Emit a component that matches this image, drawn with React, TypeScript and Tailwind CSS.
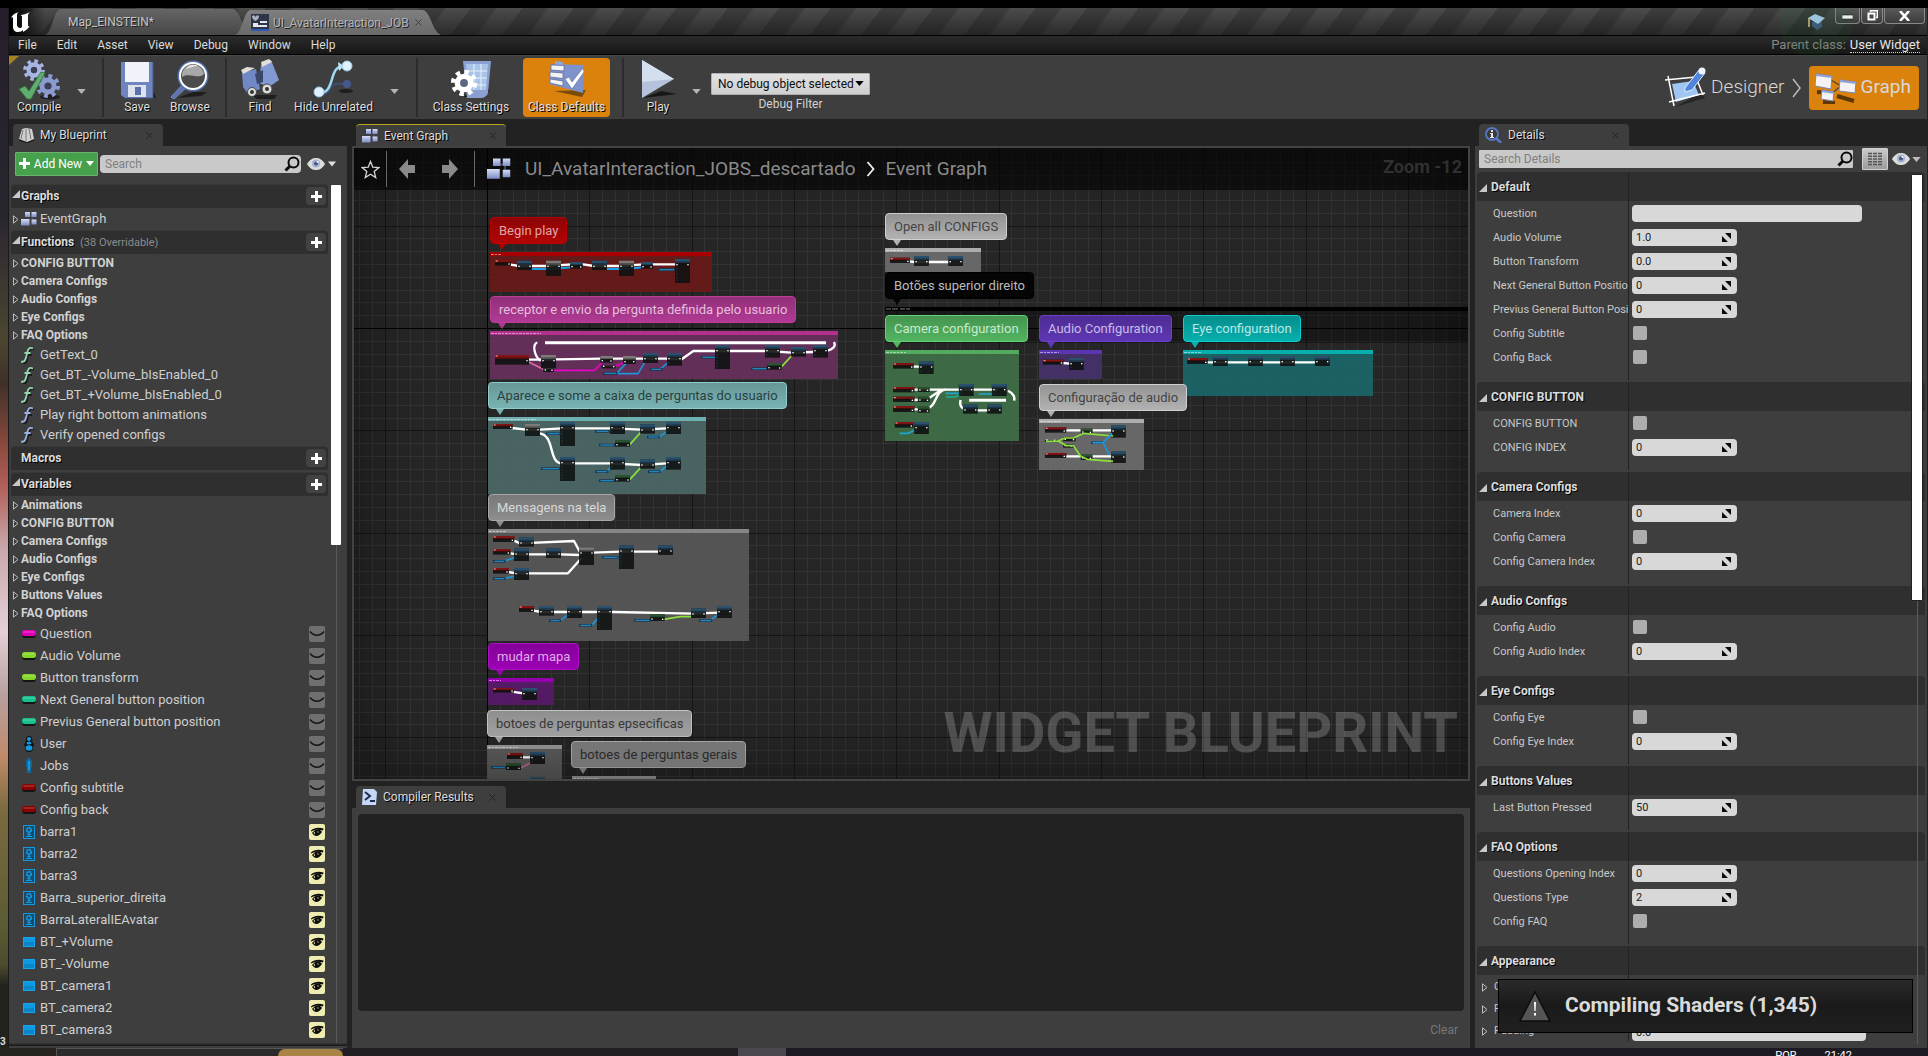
import React, { useState } from "react";

/* ---------- small glyphs ---------- */

const Caret = ({ className = "" }: { className?: string }) => (
  <svg className={className} width="10" height="6" viewBox="0 0 10 6" aria-hidden="true">
    <path d="M0 0h10L5 6z" fill="currentColor" />
  </svg>
);

const Magnifier = () => (
  <svg width="16" height="16" viewBox="0 0 16 16" fill="none" stroke="#0a0a0a" aria-hidden="true">
    <circle cx="9.5" cy="6.5" r="5" strokeWidth="2" />
    <path d="M6 10L1.5 14.5" strokeWidth="3" />
  </svg>
);

const ViewEye = () => (
  <svg width="18" height="12" viewBox="0 0 18 12" aria-hidden="true">
    <path d="M0 6C3 1 6 0 9 0s6 1 9 6c-3 5-6 6-9 6S3 11 0 6z" fill="#dcdcdc" />
    <circle cx="9" cy="5.500" r="4" fill="#a3b2d2" />
    <circle cx="9" cy="5.500" r="2" fill="#46557c" />
    <circle cx="10.500" cy="4" r="1" fill="#fff" />
  </svg>
);

const GraphGlyph = ({ size = 16 }: { size?: number }) => (
  <svg width={size} height={size} viewBox="0 0 16 16" aria-hidden="true">
    <defs>
      <linearGradient id="gg" x1="0" y1="0" x2="0" y2="1">
        <stop offset="0" stopColor="#d5ddf7" />
        <stop offset="1" stopColor="#7c8cc4" />
      </linearGradient>
    </defs>
    <path d="M4 5h10M12 3v10" stroke="#556" strokeWidth="1" />
    <rect x="4" y="1" width="5" height="5" fill="url(#gg)" />
    <rect x="10.500" y="1" width="5" height="5" fill="url(#gg)" />
    <rect x="0" y="8" width="8.500" height="6.500" fill="url(#gg)" />
    <rect x="10.500" y="8.500" width="5" height="5" fill="url(#gg)" />
  </svg>
);

const Plus = ({ s = 11 }: { s?: number }) => (
  <svg width={s} height={s} viewBox="0 0 11 11" aria-hidden="true">
    <path d="M4 0h3v4h4v3H7v4H4V7H0V4h4z" fill="#fff" />
  </svg>
);

const Expanded = () => (
  <svg width="8" height="8" viewBox="0 0 8 8" className="shrink-0" aria-hidden="true">
    <path d="M8 0v8H0z" fill="#c8c8c8" />
  </svg>
);

const Collapsed = () => (
  <svg width="6" height="9" viewBox="0 0 6 9" className="shrink-0" aria-hidden="true">
    <path d="M.5.8v7.400L5 4.500z" fill="none" stroke="#bdbdbd" />
  </svg>
);

const CloseX = () => (
  <svg width="7" height="7" viewBox="0 0 7 7" aria-hidden="true">
    <path d="M.5.5l6 6M6.500.5l-6 6" stroke="#222222" strokeWidth="1" />
  </svg>
);

/* ---------- toolbar drawings ---------- */

const gear = (cx: number, cy: number, r: number, fill: string, hole: string) => (
  <g>
    <circle cx={cx} cy={cy} r={r} fill="none" stroke={fill} strokeWidth={r * 0.4} strokeDasharray={`${r * 0.393} ${r * 0.393}`} />
    <circle cx={cx} cy={cy} r={r * 0.85} fill={fill} />
    <circle cx={cx} cy={cy} r={r * 0.36} fill={hole} />
  </g>
);

const CompileIcon = () => (
  <svg width="42" height="42" viewBox="0 0 42 42" aria-hidden="true">
    <ellipse cx="32" cy="38" rx="10" ry="2.500" fill="#1e1e1e" />
    {gear(16, 11, 9, "#a8b5e2", "#3a3f55")}
    {gear(30, 27, 10, "#8b9bd0", "#3a3f55")}
    <path d="M1 30l6-3 4 5L23 13l4 1-14 26H9z" fill="#5fae6e" stroke="#2e6e3c" strokeWidth=".8" />
  </svg>
);
const SaveIcon = () => (
  <svg width="42" height="42" viewBox="0 0 42 42" aria-hidden="true">
    <path d="M8 39h32l-2-6z" fill="#1e1e1e" />
    <path d="M5 3h32v36H9l-4-3z" fill="#6f85bd" />
    <path d="M9 3h24v20H9z" fill="#f1f3fa" />
    <path d="M12 26h18v12H12z" fill="#dde2f0" />
    <path d="M19 28h6v8h-6z" fill="#5b70a8" />
    <path d="M37 3v36H10" fill="none" stroke="#46588c" />
  </svg>
);
const BrowseIcon = () => (
  <svg width="42" height="42" viewBox="0 0 42 42" aria-hidden="true">
    <path d="M8 39l16-6 14 0-6 4z" fill="#1e1e1e" />
    <path d="M13 26L2 38l3 2 12-11z" fill="#5c74b4" stroke="#8ea2d8" strokeWidth=".6" />
    <circle cx="24" cy="17" r="15.500" fill="#5470b0" />
    <circle cx="24" cy="17" r="14" fill="#fff" />
    <circle cx="24" cy="17" r="12" fill="#4c4c4c" />
    <path d="M13 18a11 11 0 0 1 22-3c-6 6-14-2-22 3z" fill="#a8a8a8" />
    <path d="M17 10a9 9 0 0 1 12-3c-5 0-8 2-12 3z" fill="#e6e6e6" />
  </svg>
);
const FindIcon = () => (
  <svg width="42" height="42" viewBox="0 0 42 42" aria-hidden="true">
    <path d="M12 36h26l-3 4H18z" fill="#1e1e1e" />
    <path d="M3 14l14-4 4 20-12 5-5-7z" fill="#7188c6" />
    <path d="M22 6l10-5 8 20-10 7-10-4z" fill="#8399d6" />
    <path d="M2 11l6-3 8 1-12 6z" fill="#e2dfd8" />
    <path d="M22 3l8-3 3 3-10 5z" fill="#e2dfd8" />
    <path d="M16 15l8-4v12l-6 2z" fill="#3a4668" />
    <circle cx="13" cy="33" r="4.500" fill="#dcdcdc" stroke="#444" />
    <circle cx="28" cy="30" r="5" fill="#dcdcdc" stroke="#444" />
    <circle cx="13" cy="33" r="2" fill="#333" />
    <circle cx="28" cy="30" r="2" fill="#333" />
  </svg>
);
const HideIcon = () => (
  <svg width="42" height="42" viewBox="0 0 42 42" aria-hidden="true">
    <path d="M6 36c12-1 10-8 14-10s8-1 14-1" fill="none" stroke="#3d4c70" strokeWidth="2.500" />
    <ellipse cx="33" cy="32" rx="7" ry="2" fill="#1e1e1e" />
    <circle cx="34" cy="25" r="4" fill="#44588c" />
    <path d="M6 34c18 0 8-28 26-27" fill="none" stroke="#9fd8f2" strokeWidth="2.500" />
    <path d="M25 3l6 4-5 5z" fill="#bfe6f8" />
    <circle cx="34" cy="7" r="5" fill="#dff1fc" stroke="#9cc9e6" />
    <circle cx="6" cy="33" r="5" fill="#dff1fc" stroke="#9cc9e6" />
  </svg>
);
const SettingsIcon = () => (
  <svg width="42" height="42" viewBox="0 0 42 42" aria-hidden="true">
    <path d="M10 38h26l4-8z" fill="#1e1e1e" />
    <path d="M13 2h28l-3 32c-1 4-5 5-8 5H17z" fill="#8b9fd0" />
    <path d="M16 5h22l-2 26H18z" fill="#a9c4e6" />
    <path d="M17 12h20M17 19h20M17 26h19M24 5v26M31 5v26" stroke="#e6f0fa" />
    {gear(14, 24, 11, "#ffffff", "#5b6685")}
  </svg>
);
const DefaultsIcon = () => (
  <svg width="42" height="42" viewBox="0 0 42 42" aria-hidden="true">
    <path d="M8 32l32-1-4 7z" fill="#7a4a0a" />
    <path d="M5 5L38 6l-1 28L3 25z" fill="#7e93cc" />
    <path d="M9 2l8 1v3H9z" fill="#90a4d8" />
    <path d="M5 6l13 .5v5.500L5 11zM4 13l13 1v5.500L4 18zM4 20l13 2v5L4 24z" fill="#f3f3f6" stroke="#55618c" strokeWidth=".7" />
    <path d="M19 20l4-2 3 5L37 9l1 4-12 17z" fill="#fff" stroke="#4a568a" strokeWidth=".5" />
  </svg>
);
const PlayIcon = () => (
  <svg width="42" height="42" viewBox="0 0 42 42" aria-hidden="true">
    <path d="M6 39l34-4-16-3z" fill="#171717" />
    <path d="M5 1l32 19L5 39z" fill="#b5c2dc" />
    <path d="M5 1l32 19-32 3z" fill="#d3deef" />
  </svg>
);
const DesignerIcon = () => (
  <svg width="42" height="42" viewBox="0 0 42 42" aria-hidden="true">
    <path d="M10 40l30-9-4-5z" fill="#262626" />
    <path d="M7 17l21-3 6 14-23 7z" fill="#9fc6f2" />
    <path d="M0 13l31-3M3 9l6 30M4 35l36-9M30 8l8 20" stroke="#fff" strokeWidth="1.500" fill="none" />
    <path d="M20 21L34 3l6 3-13 17-7 2z" fill="#4f86dc" stroke="#dfeaff" strokeWidth="1" />
    <circle cx="37" cy="4" r="3.500" fill="#f2f6ff" />
  </svg>
);
const WindowsIcon = () => (
  <svg width="42" height="32" viewBox="0 0 42 32" aria-hidden="true">
    <path d="M2 20l14 1M22 24l17 5M8 30l12 1" stroke="#5c3605" strokeWidth="4" />
    <path d="M16 8l10 6M16 22l10-8" stroke="#444" strokeWidth="1.200" />
    <path d="M1 2l16 2-1 13L0 14z" fill="#f4f2f2" stroke="#7b84ad" />
    <path d="M25 8l16 2-1 11-16-2z" fill="#f4f2f2" stroke="#7b84ad" />
    <path d="M7 18l12 2-1 9-12-2z" fill="#f4f2f2" stroke="#7b84ad" />
    <path d="M1 3l16 2M25 9l16 2M7 19l12 2" stroke="#8fa2d8" strokeWidth="2" />
  </svg>
);

/* ---------- title bar ---------- */

const TabShape = ({ top, bottom }: { top: string; bottom: string }) => (
  <svg className="absolute inset-0 h-full w-full" viewBox="0 0 206 26" preserveAspectRatio="none" aria-hidden="true">
    <defs>
      <linearGradient id={"t" + top.slice(1)} x1="0" y1="0" x2="0" y2="1">
        <stop offset="0" stopColor={top} />
        <stop offset="1" stopColor={bottom} />
      </linearGradient>
    </defs>
    <path d="M0 26C7 24 8 3 15 0h173c8 2 9 22 18 26z" fill={`url(#t${top.slice(1)})`} />
  </svg>
);

const TitleBar = () => (
  <header className="relative flex h-[27px] shrink-0 bg-[linear-gradient(to_bottom,transparent,rgba(10,10,10,.5)),repeating-linear-gradient(127deg,#3e3e3e_0px,#3e3e3e_19px,#4c4c4c_22px,#4c4c4c_41px)]">
    <div className="flex w-9 items-center bg-gradient-to-r from-black to-transparent pl-0.5">
      <svg width="20" height="20" viewBox="0 0 20 20" aria-label="Unreal Engine" role="img">
        <path
          d="M0 6C1 3 4 1 8 0 6 1 6 2 6 4v9c0 2 2 3 3 3s2-.5 2-2V5c0-1-.5-1.500-1.500-2 2 0 6-1 9.500-3-1.500 1.500-2 2.500-2 4v9c0 1 .5 1.500 1.500 1.200C17 17 14 19 12 20v-2c-1 1.200-2.500 2-5 2-3 0-5-2-5-5V6C2 5 1 5 0 6z"
          fill="#fff"
        />
      </svg>
    </div>
    <button className="relative mt-px flex w-[206px] items-center pl-[23px] text-xs text-[#c4c4c4] [text-shadow:1px_1px_0_#222]">
      <TabShape top="#656565" bottom="#474747" />
      <span className="relative">Map_EINSTEIN*</span>
    </button>
    <button className="relative -ml-4 mt-0.5 flex w-[206px] items-center gap-1 pl-4 text-xs text-[#b4b4b4] [text-shadow:1px_1px_0_#222]">
      <TabShape top="#7f7f7f" bottom="#6a6a6a" />
      <svg className="relative" width="18" height="17" viewBox="0 0 18 17" aria-hidden="true">
        <rect width="18" height="17" fill="#2d3648" />
        <rect y="15" width="18" height="2" fill="#2f59b8" />
        <path d="M1 2c2-2 3 0 3.500 1C5 2 6 0 8 2c0 3-2 4-3.500 5C3 6 1 5 1 2z" fill="#aab0bd" />
        <path d="M9 7h7v2H9zM2 11h14v2H2zM2 9h5v2H2z" fill="#e6e8ee" />
      </svg>
      <span className="relative whitespace-nowrap">UI_AvatarInteraction_JOB</span>
      <span className="relative ml-0.5 opacity-60">
        <CloseX />
      </span>
    </button>
    <div className="ml-auto flex items-start">
      <svg className="mr-2.5 mt-1.5" width="17" height="16" viewBox="0 0 17 16" aria-hidden="true">
        <path d="M4 8v4l5 4 5-3V7z" fill="#405a80" />
        <path d="M0 4l7-4 10 4-7 6z" fill="#a8cdf0" />
        <path d="M1 4v9" stroke="#e0c48a" strokeWidth="1.500" />
      </svg>
      <div className="mr-0.5 flex h-4 gap-px">
        <button aria-label="Minimize" className="flex w-[25px] items-center justify-center rounded-b-sm border border-t-0 border-[#8a8a8a] bg-gradient-to-b from-[#5a5a5a] to-[#3c3c3c]">
          <svg width="11" height="9" viewBox="0 0 11 9"><path d="M0 4h11v4H0z" fill="#fff" stroke="#111" strokeWidth=".6" /></svg>
        </button>
        <button aria-label="Restore" className="flex w-[22px] items-center justify-center rounded-b-sm border border-t-0 border-[#8a8a8a] bg-gradient-to-b from-[#5a5a5a] to-[#3c3c3c]">
          <svg width="11" height="11" viewBox="0 0 11 11" fill="none" stroke="#fff"><path d="M3.500 2V.7h6.800v6.800H9" strokeWidth="1.400" /><path d="M1.500 3.500h6v6h-6z" strokeWidth="2" /></svg>
        </button>
        <button aria-label="Close" className="flex w-[41px] items-center justify-center rounded-b-sm border border-t-0 border-[#8a8a8a] bg-gradient-to-b from-[#5a5a5a] to-[#3c3c3c]">
          <svg width="11" height="10" viewBox="0 0 11 10"><path d="M1 0l9 10M10 0L1 10" stroke="#fff" strokeWidth="2.600" /></svg>
        </button>
      </div>
    </div>
    <div className="pointer-events-none absolute right-[74px] -bottom-[23px] z-10 size-[74px] rounded-full bg-[#1f7a2a]/10 [clip-path:inset(24px_0_0_0)]" />
  </header>
);

const MenuBar = () => (
  <nav className="flex h-5 shrink-0 items-center border-y border-black bg-gradient-to-b from-[#2b2b2b] to-[#171717] pr-[7px] pl-[9px] text-xs text-[#dadada]">
    <div className="flex gap-5">
      {["File", "Edit", "Asset", "View", "Debug", "Window", "Help"].map((m) => (
        <button key={m}>{m}</button>
      ))}
    </div>
    <div className="ml-auto flex gap-1 text-[13px] leading-[15px]">
      <span className="text-[#858585]">Parent class:</span>
      <a href="#parent" className="border-b border-dotted border-[#d0d0d0] text-[#e6e6e6]">User Widget</a>
    </div>
  </nav>
);

/* ---------- toolbar ---------- */

const Tool = ({ icon, label, active, w }: { icon: React.ReactNode; label: string; active?: boolean; w: string }) => (
  <button className={`flex h-[59px] flex-col items-center justify-between rounded-sm pt-px pb-0.5 text-xs leading-4 whitespace-nowrap text-[#dedede] [text-shadow:1px_1px_0_#000] ${w} ${active ? "bg-[#da820c]" : ""}`}>
    {icon}
    <span className="-mt-1">{label}</span>
  </button>
);
const Sep = () => <div className="h-[59px] w-0.5 bg-[#2c2c2c]" />;
const Drop = ({ label }: { label: string }) => (
  <button aria-label={label} className="mt-2 text-[#b5b5b5]">
    <Caret className="h-[5px] w-[9px]" />
  </button>
);

const Toolbar = () => (
  <div className="relative flex h-16 shrink-0 items-center border-t border-[#484848] bg-[#3e3e3e] pr-2 text-white">
    <svg className="absolute top-0 left-0" width="10" height="9" viewBox="0 0 10 9" aria-hidden="true"><path d="M0 0h10L0 9z" fill="#a88420" /></svg>
    <div className="flex items-center pl-[3px]">
      <Tool w="w-[54px]" icon={<CompileIcon />} label="Compile" />
      <div className="flex w-9 justify-start pl-[11px]"><Drop label="Compile options" /></div>
      <Sep />
      <div className="flex pl-2">
        <Tool w="w-[50px]" icon={<SaveIcon />} label="Save" />
        <Tool w="w-[56px]" icon={<BrowseIcon />} label="Browse" />
      </div>
      <div className="w-[7px]" />
      <Sep />
      <div className="flex pl-2">
        <Tool w="w-[50px]" icon={<FindIcon />} label="Find" />
        <Tool w="w-[97px]" icon={<HideIcon />} label="Hide Unrelated" />
      </div>
      <div className="flex w-[30px] justify-start pl-2"><Drop label="Hide unrelated options" /></div>
      <div className="w-1" />
      <Sep />
      <div className="flex pl-2">
        <Tool w="w-[90px]" icon={<SettingsIcon />} label="Class Settings" />
        <div className="w-[7px]" />
        <Tool w="w-[87px]" icon={<DefaultsIcon />} label="Class Defaults" active />
      </div>
      <div className="w-3" />
      <Sep />
      <div className="w-2.5" />
      <Tool w="w-[48px]" icon={<PlayIcon />} label="Play" />
      <div className="flex w-[29px] justify-center"><Drop label="Play options" /></div>
      <div className="flex flex-col items-center">
        <div className="relative mt-2.5">
          <select id="debug" defaultValue="none" className="block h-[22px] w-[159px] appearance-none rounded-[1px] border border-[#b0b0b0] bg-gradient-to-b from-[#e2e2e2] to-[#cfcfcf] pl-1.5 text-xs text-[#0c0c0c]">
            <option value="none">No debug object selected</option>
          </select>
          <Caret className="pointer-events-none absolute top-2 right-1.5 h-[5px] w-[9px] text-black" />
        </div>
        <label htmlFor="debug" className="text-xs leading-[18px] text-[#d2d2d2]">Debug Filter</label>
      </div>
    </div>
    <div className="ml-auto flex items-center text-[19px] text-[#d8d8d8]">
      <button className="flex items-center gap-1 font-light">
        <DesignerIcon /> Designer
      </button>
      <svg className="mx-1.5" width="12" height="20" viewBox="0 0 12 20" aria-hidden="true"><path d="M2 1l7 9-7 9" fill="none" stroke="#bbb" strokeWidth="1.500" /></svg>
      <button className="flex h-11 items-center gap-1 rounded-sm bg-[#da820c] pr-2 pl-1.5">
        <WindowsIcon /> Graph
      </button>
    </div>
  </div>
);

/* ---------- dock tabs ---------- */

const DockTab = ({ icon, label, active }: { icon: React.ReactNode; label: string; active?: boolean }) => (
  <div className="h-[27px] shrink-0 pt-[5px] pl-1">
    <div className={`flex h-[22px] w-[150px] items-center rounded-t-sm bg-[#3e3e3e] pr-2.5 pl-1.5 ${active ? "border-t border-[#b8a51c]" : ""}`}>
      <button className="flex items-center gap-1.5 text-xs text-[#dcdcdc] [text-shadow:1px_1px_0_#000]">
        {icon}
        {label}
      </button>
      <button aria-label={"Close " + label} className="ml-auto"><CloseX /></button>
    </div>
  </div>
);

/* ---------- My Blueprint ---------- */

const HeaderRow = ({ title, note, open = true }: { title: string; note?: string; open?: boolean }) => (
  <div className="flex h-6 shrink-0 items-center rounded-t-sm border-t border-[#383838] bg-[#2f2f2f] pr-0.5 pb-px pl-px">
    <span className="flex w-[9px] pb-1">{open && <Expanded />}</span>
    <span className="text-xs font-bold text-[#dcdcdc] [text-shadow:1px_1px_0_#000]">{title}</span>
    {note && <span className="ml-1.5 pt-0.5 text-[11px] text-[#8c8c8c]">{note}</span>}
    <button aria-label={"Add to " + title} className="ml-auto flex h-[18px] w-5 items-center justify-center rounded-sm bg-[#424242]"><Plus /></button>
  </div>
);

const GroupRow = ({ title }: { title: string }) => (
  <button className="flex h-[18px] w-full items-center gap-0.5 pl-0.5 text-left text-xs font-bold text-[#d2d2d2]">
    <Collapsed />
    {title}
  </button>
);

const FnRow = ({ title, color }: { title: string; color: string }) => (
  <button className="flex h-5 w-full items-center gap-1.5 pl-2.5 text-left text-[13px] text-[#cfcfcf]">
    <svg width="13" height="17" viewBox="0 0 13 17" className="shrink-0" aria-hidden="true">
      <path d="M1 15c4 1.500 4-3 5-8S8 0 12 1.500M3 7h7" fill="none" stroke="#1c1c1c" strokeWidth="2" transform="translate(1 1)" />
      <path d="M0 14.500c4 1.500 5-3 6-8S8 0 12 1.500M3.500 6h6" fill="none" stroke={color} strokeWidth="1.800" />
    </svg>
    {title}
  </button>
);

type Kind = "pill" | "person" | "object" | "image" | "button";
const VarGlyph = ({ kind, color }: { kind: Kind; color: string }) => {
  if (kind === "pill")
    return (
      <svg width="14" height="8" viewBox="0 0 14 8" aria-hidden="true">
        <rect y="2" width="14" height="6" rx="3" fill="#141414" />
        <rect width="14" height="6" rx="2.500" fill={color} />
        <rect x="1" y="1" width="12" height="2" rx="1" fill="#fff" opacity=".15" />
      </svg>
    );
  if (kind === "person")
    return (
      <svg width="14" height="16" viewBox="0 0 14 16" aria-hidden="true">
        <path d="M7 0a3 3 0 0 1 3 3c0 1 1 2 0 3 3 2 2 4 1 5 1 3-2 5-4 5s-5-2-4-5C2 9 2 8 4 6 3 5 4 4 4 3a3 3 0 0 1 3-3z" fill="#101010" />
        <circle cx="7" cy="3" r="2" fill="#1598e0" />
        <ellipse cx="7" cy="7" rx="2.500" ry="1.500" fill="#1598e0" />
        <ellipse cx="7" cy="12" rx="3.500" ry="2.800" fill="#1598e0" />
      </svg>
    );
  if (kind === "object")
    return (
      <svg width="14" height="16" viewBox="0 0 14 16" aria-hidden="true">
        <path d="M4 3l2-3h2l2 3v6l-1 1v5H5v-5L4 9z" fill="#12689a" />
        <path d="M6 3h2v9H6z" fill="#1598e0" />
      </svg>
    );
  if (kind === "image")
    return (
      <svg width="12" height="14" viewBox="0 0 12 14" fill="none" stroke={color} aria-hidden="true">
        <rect x=".5" y=".5" width="11" height="13" fill="#1c4a66" />
        <circle cx="6" cy="5" r="2.200" strokeWidth="2" strokeDasharray="1.800 .5" />
        <path d="M6 6v5M3 11.500h6M4 9l2 1 2-1" />
      </svg>
    );
  return (
    <svg width="12" height="10" viewBox="0 0 12 10" aria-hidden="true">
      <rect x=".5" y=".5" width="11" height="9" fill="#0a86c8" stroke="#12a4ee" />
      <path d="M1 1h10v4H1z" fill="#0d99e2" />
    </svg>
  );
};

const VarRow = ({ name, kind, color }: { name: string; kind: Kind; color: string }) => {
  const [open, setOpen] = useState(kind === "image" || kind === "button");
  return (
    <div className="flex h-[22px] items-center pr-[3px] pl-[11px]">
      <span className="flex w-[18px] justify-start">
        <span className="flex w-3.5 justify-center"><VarGlyph kind={kind} color={color} /></span>
      </span>
      <span className="text-[13px] text-[#cfcfcf]">{name}</span>
      <button
        aria-label={"Toggle visibility of " + name}
        onClick={() => setOpen(!open)}
        className={`ml-auto flex size-4 items-center justify-center rounded-[2px] ${open ? "bg-[#efecb2]" : "bg-[#6f6f6f]"}`}
      >
        {open ? (
          <svg width="14" height="10" viewBox="0 0 14 10" aria-hidden="true">
            <path d="M1 3.500C4 .5 9 0 13.500 1.500L13 3.500C9 2.500 5 2.500 1 4.500z" fill="#0b0b0b" />
            <path d="M2 6c2-2.500 4-3.500 6-3.500S11 3.500 12 5c-2 2.500-3.500 4-5.500 4S3.500 8 2 6z" fill="#0b0b0b" />
            <path d="M3.500 6l1.500-1.500v3z" fill="#d8d6a4" />
            <circle cx="8" cy="5" r=".7" fill="#d8d6a4" />
          </svg>
        ) : (
          <svg width="16" height="8" viewBox="0 0 16 8" aria-hidden="true"><path d="M1 1.500c4 5 10 5 14 0" fill="none" stroke="#141414" strokeWidth="1.400" /></svg>
        )}
      </button>
    </div>
  );
};

const fnGroups = ["CONFIG BUTTON", "Camera Configs", "Audio Configs", "Eye Configs", "FAQ Options"];
const varGroups = ["Animations", "CONFIG BUTTON", "Camera Configs", "Audio Configs", "Eye Configs", "Buttons Values", "FAQ Options"];
const fns: [string, string][] = [
  ["GetText_0", "#96d6ac"],
  ["Get_BT_-Volume_bIsEnabled_0", "#96d6ac"],
  ["Get_BT_+Volume_bIsEnabled_0", "#96d6ac"],
  ["Play right bottom animations", "#9db2e4"],
  ["Verify opened configs", "#9db2e4"],
];
const vars: [string, Kind, string][] = [
  ["Question", "pill", "#dd00b8"],
  ["Audio Volume", "pill", "#84d628"],
  ["Button transform", "pill", "#84d628"],
  ["Next General button position", "pill", "#15c08c"],
  ["Previus General button position", "pill", "#15c08c"],
  ["User", "person", "#1598e0"],
  ["Jobs", "object", "#1598e0"],
  ["Config subtitle", "pill", "#8a0000"],
  ["Config back", "pill", "#8a0000"],
  ["barra1", "image", "#109be4"],
  ["barra2", "image", "#109be4"],
  ["barra3", "image", "#109be4"],
  ["Barra_superior_direita", "image", "#109be4"],
  ["BarraLateralIEAvatar", "image", "#109be4"],
  ["BT_+Volume", "button", "#109be4"],
  ["BT_-Volume", "button", "#109be4"],
  ["BT_camera1", "button", "#109be4"],
  ["BT_camera2", "button", "#109be4"],
  ["BT_camera3", "button", "#109be4"],
];

const BlueprintPanel = () => (
  <aside className="flex w-[338px] shrink-0 flex-col">
    <DockTab
      label="My Blueprint"
      icon={
        <svg width="15" height="15" viewBox="0 0 15 15" aria-hidden="true">
          <path d="M3 1l4-1 6 1 2 10-7 3-8-3z" fill="#d0d0d0" />
          <path d="M4 2L2 11M7 1v12M10 1l2 10" stroke="#777" fill="none" />
          <path d="M0 12l8 3 7-3" stroke="#151515" fill="none" />
        </svg>
      }
    />
    <div className="flex min-h-0 flex-1 flex-col bg-[#3e3e3e] px-0.5">
      <div className="flex h-[38px] shrink-0 items-center pb-[3px] pl-1">
        <button className="flex h-6 w-[83px] items-center justify-center gap-1 rounded-[1px] border border-[#6ab36f] bg-[#46a04c] text-xs whitespace-nowrap text-white">
          <Plus /> Add New <Caret className="h-[5px] w-2" />
        </button>
        <div className="ml-0.5 flex h-[18px] w-[201px] items-center rounded-sm bg-[#c9c9c9] pr-px pl-[5px]">
          <input aria-label="Search blueprint" placeholder="Search" className="min-w-0 flex-1 bg-transparent text-xs outline-none placeholder:text-[#808080]" />
          <Magnifier />
        </div>
        <button aria-label="View options" className="ml-1.5 flex items-center gap-[3px] text-[#e0e0e0]"><ViewEye /><Caret className="h-1.5 w-2" /></button>
      </div>
      <div className="flex min-h-0 flex-1">
        <div className="flex min-h-0 flex-1 flex-col overflow-hidden">
          <HeaderRow title="Graphs" />
          <button className="flex h-[22px] shrink-0 items-center gap-0.5 pl-0.5 text-[13px] text-[#cfcfcf]">
            <Collapsed />
            <GraphGlyph />
            <span className="ml-px">EventGraph</span>
          </button>
          <HeaderRow title="Functions" note="(38 Overridable)" />
          <div>{fnGroups.map((g) => <GroupRow key={g} title={g} />)}</div>
          <div className="py-px">{fns.map(([t, c]) => <FnRow key={t} title={t} color={c} />)}</div>
          <HeaderRow title="Macros" open={false} />
          <div className="h-0.5 shrink-0" />
          <HeaderRow title="Variables" />
          <div>{varGroups.map((g) => <GroupRow key={g} title={g} />)}</div>
          <div className="pt-px">{vars.map(([n, k, c]) => <VarRow key={n} name={n} kind={k} color={c} />)}</div>
        </div>
        <div className="ml-[3px] flex w-3.5 shrink-0 flex-col items-center pr-1">
          <div className="mt-px h-[360px] w-2.5 rounded-[1px] bg-white" />
          <div className="w-px flex-1 bg-[#5a5a5a]" />
        </div>
      </div>
      <div className="-mx-0.5 h-[5px] shrink-0 border-b-2 border-[#3e3e3e] bg-gradient-to-b from-[#3a3a3a] to-[#161616]" />
    </div>
  </aside>
);

/* ---------- event graph canvas ---------- */

type NodeKind = "r" | "b" | "g" | "v" | "p" | "d";
type N = [number, number, number, number, NodeKind];
const headFill: Record<NodeKind, string> = { r: "#8c1414", b: "#2d5675", g: "#8a8583", v: "#2f5a34", p: "#1c5b80", d: "#333" };

const Nodes = ({ items }: { items: N[] }) => (
  <g>
    {items.map(([x, y, w, h, k], i) =>
      k === "p" ? (
        <g key={i}>
          <rect x={x} y={y} width={w} height={8} fill="#1a3445" />
          <rect x={x + 4} y={y + 2} width={w - 8} height={4} fill="#2285bd" />
        </g>
      ) : (
        <g key={i}>
          <rect x={x} y={y} width={w} height={h} fill="#0f1312" opacity=".9" />
          <rect x={x} y={y} width={w} height={Math.min(12, h / 2.2)} fill={headFill[k]} opacity=".9" />
          <rect x={x} y={y + Math.min(7, h / 3)} width={w} height={Math.min(5, h / 4)} fill="#000" opacity=".35" />
          {k !== "r" && <rect x={x + 4} y={y + Math.min(15, h - 8)} width={4} height={4} fill="#fff" />}
          <rect x={x + w - 8} y={y + Math.min(15, h - 7)} width={4} height={4} fill="#fff" />
          {k === "r" && <rect x={x + 2} y={y + 1} width={6} height={4} fill="#e88" />}
          {h > 34 && k === "b" && <path d={`M${x + 6} ${y + 28}v${h - 34}`} stroke="#2ca0c8" strokeWidth="2" strokeDasharray="3 6" opacity=".7" />}
        </g>
      )
    )}
  </g>
);

const Wires = ({ d, c = "#fff", w = 7 }: { d: string; c?: string; w?: number }) => (
  <path d={d} fill="none" stroke={c} strokeWidth={w} strokeLinejoin="round" />
);

const comments: [number, number, number, number, string, string, number][] = [
  [490, 252, 222, 40, "#a80000", "#6b1a1a", 32],
  [490, 331, 348, 48, "#b2318c", "#67305c", 150],
  [488, 417, 218, 77, "#6eafaf", "#4c6868", 140],
  [488, 529, 261, 112, "#868686", "#585858", 54],
  [488, 678, 66, 27, "#9400ab", "#591a69", 36],
  [487, 745, 75, 40, "#9a9a9a", "#626262", 90],
  [572, 776, 84, 10, "#9a9a9a", "#626262", 78],
  [885, 248, 96, 24, "#adadad", "#6d6d6d", 50],
  [885, 350, 134, 91, "#50ab5e", "#3f6f48", 62],
  [1039, 350, 63, 29, "#5b34b2", "#46316b", 56],
  [1183, 350, 190, 46, "#06aeac", "#1b6567", 50],
  [1039, 419, 105, 51, "#adadad", "#6d6d6d", 62],
];

const bubbles: [string, string, string][] = [
  ["Begin play", "left-[136px] top-[69px]", "from-[#8e0505] to-[#b20505] border-[#bd0000] text-[#e2a5a5]"],
  ["receptor e envio da pergunta definida pelo usuario", "left-[136px] top-[148px]", "from-[#923079] to-[#b03a94] border-[#bf3a99] text-[#e6bfdd]"],
  ["Aparece e some a caixa de perguntas do usuario", "left-[134px] top-[234px]", "from-[#689696] to-[#78b3b3] border-[#8fcccc] text-[#2a4040]"],
  ["Mensagens na tela", "left-[134px] top-[346px]", "from-[#797979] to-[#8d8d8d] border-[#a6a6a6] text-[#d8d8d8]"],
  ["mudar mapa", "left-[134px] top-[495px]", "from-[#85009a] to-[#9c00b4] border-[#ab10c4] text-[#dfade6]"],
  ["botoes de perguntas epsecificas", "left-[133px] top-[562px]", "from-[#909090] to-[#a8a8a8] border-[#c6c6c6] text-[#3a3a3a]"],
  ["botoes de perguntas gerais", "left-[217px] top-[593px]", "from-[#7f7f7f] to-[#8e8e8e] border-[#b2b2b2] text-[#303030]"],
  ["Open all CONFIGS", "left-[531px] top-[65px]", "from-[#949494] to-[#b2b2b2] border-[#d0d0d0] text-[#444444]"],
  ["Botões superior direito", "left-[531px] top-[124px]", "from-[#050505] to-[#050505] border-[#000000] text-[#bcbcbc]"],
  ["Camera configuration", "left-[531px] top-[167px]", "from-[#45944f] to-[#52b461] border-[#62d473] text-[#c8e9cc]"],
  ["Audio Configuration", "left-[685px] top-[167px]", "from-[#4e2b92] to-[#5e38b4] border-[#6b40cd] text-[#c9bcea]"],
  ["Eye configuration", "left-[829px] top-[167px]", "from-[#068d8c] to-[#06b0ae] border-[#0acfcc] text-[#b8e8e6]"],
  ["Configuração de audio", "left-[685px] top-[236px]", "from-[#949494] to-[#b2b2b2] border-[#d0d0d0] text-[#444444]"],
];
const tails: [number, number, string][] = [
  [502, 244, "#a80404"], [502, 323, "#ad3891"], [500, 409, "#76b0b0"], [500, 521, "#8d8d8d"], [500, 670, "#9c00b4"],
  [499, 737, "#a8a8a8"], [583, 768, "#909090"], [897, 240, "#b0b0b0"], [897, 299, "#050505"], [897, 342, "#52b461"],
  [1051, 342, "#5e38b4"], [1195, 342, "#06b0ae"], [1051, 411, "#b0b0b0"],
];

const minor = Array.from({ length: 200 }, (_, i) => i - 20);
const GridLines = () => (
  <g shapeRendering="crispEdges">
    {minor.filter((i) => i % 8 !== 0).map((i) => (
      <g key={i} fill="#333333">
        <rect x={Math.round(487 + i * 12.79)} y="0" width="1" height="1400" />
        <rect x="0" y={Math.round(328 + i * 12.79)} width="3000" height="1" />
      </g>
    ))}
    {minor.filter((i) => i % 8 === 0).map((i) => (
      <g key={i} fill={i === 0 ? "#000000" : "#161616"}>
        <rect x={Math.round(487 + i * 12.79)} y="0" width="1" height="1400" />
        <rect x="0" y={Math.round(328 + i * 12.79)} width="3000" height="1" />
      </g>
    ))}
  </g>
);

const GraphArt = () => (
  <svg className="absolute inset-0 h-full w-full" aria-hidden="true">
    <g transform="translate(-354 -148)">
      <GridLines />
      <rect x="885" y="311" width="2000" height="32" fill="#000" opacity=".35" />
      <rect x="885" y="307" width="2000" height="4" fill="#000" />
      <path d="M886 309h24" stroke="#fff" opacity=".5" strokeDasharray="5 1 6 2" />
      {comments.map(([x, y, w, h, head, body, t], i) => (
        <g key={i} shapeRendering="crispEdges">
          <rect x={x} y={y} width={w} height={h} fill={body} opacity=".93" />
          <rect x={x} y={y} width={w} height="4" fill={head} />
          <path d={`M${x + 1} ${y + 2}h${t / 3}`} stroke="#fff" opacity=".5" strokeDasharray="3 1 2 1" />
        </g>
      ))}
      {tails.map(([x, y, c], i) => <path key={i} d={`M${x - 4} ${y}h8l-4 6z`} fill={c} />)}

      <g transform="translate(480 200) scale(.33333)">
        <Wires d="M92 194L118 198H205L275 193H310L342 198H424L490 193H590" />
        <Wires d="M152 207H200L240 205L272 202M378 207H420L460 205L486 202" c="#1ba1ec" w={6} />
        <Nodes items={[[45, 180, 48, 17, "r"], [111, 182, 45, 28, "b"], [198, 182, 45, 46, "g"], [270, 186, 38, 20, "b"], [336, 182, 45, 28, "b"], [417, 182, 45, 46, "g"], [483, 186, 36, 20, "b"], [534, 205, 52, 8, "p"], [585, 177, 45, 72, "b"]]} />

        <Wires d="M146 479H186L365 476H560L606 477L640 453H860L935 458L1000 456" />
        <Wires d="M182 482C162 470 156 430 172 428" />
        <Wires d="M195 428H1038" w={9} />
        <Wires d="M1062 426C1070 440 1055 448 1044 452" />
        <Wires d="M146 486L190 508H215" c="#d86f9c" w={5} />
        <Wires d="M215 511H344L366 487M400 500L438 487" c="#e800c4" w={5} />
        <Wires d="M410 520L440 488M412 521H474L494 488M540 508L564 488" c="#2093d6" w={5} />
        <Wires d="M905 500L936 466" c="#8be03c" w={5} />
        <Nodes items={[[45, 465, 102, 29, "r"], [183, 465, 45, 40, "g"], [190, 504, 32, 12, "d"], [361, 468, 38, 20, "g"], [429, 468, 38, 24, "g"], [365, 497, 42, 8, "d"], [489, 459, 45, 30, "b"], [561, 459, 45, 38, "b"], [369, 516, 44, 8, "p"], [510, 504, 38, 8, "p"], [663, 468, 46, 8, "p"], [705, 435, 45, 72, "b"], [813, 502, 50, 8, "p"], [861, 489, 44, 20, "v"], [855, 435, 45, 38, "b"], [933, 441, 45, 29, "b"], [999, 435, 45, 38, "b"]]} />

        <Wires d="M95 684L140 689H180L245 685H395L485 689L560 685" />
        <Wires d="M178 700C225 704 205 790 245 790H395L485 795L560 790" />
        <Wires d="M200 700H245M500 709H540L562 694M350 693H394M380 815L395 797M505 814H540L560 798M400 841H408M400 735H408" c="#1b97dc" w={5} />
        <Wires d="M450 733L482 697M450 838L482 803" c="#8be03c" w={5} />
        <Nodes items={[[39, 672, 59, 15, "r"], [135, 672, 45, 36, "g"], [240, 666, 45, 72, "b"], [198, 697, 44, 8, "p"], [390, 666, 45, 36, "b"], [480, 673, 45, 28, "b"], [558, 666, 45, 36, "b"], [345, 690, 44, 8, "p"], [357, 731, 48, 8, "p"], [405, 720, 45, 20, "v"], [501, 707, 38, 8, "p"], [183, 802, 58, 8, "p"], [240, 771, 45, 72, "b"], [390, 771, 45, 38, "b"], [480, 778, 45, 28, "b"], [558, 771, 45, 38, "b"], [345, 811, 40, 8, "p"], [357, 838, 48, 8, "p"], [405, 825, 45, 20, "v"], [504, 811, 38, 8, "p"]]} />
      </g>

      <g transform="translate(480 490) scale(.33333)">
        <Wires d="M102 152L120 160L282 153L302 190M92 190L110 193H240L300 195M84 246L110 250H264L304 205M340 188L420 185H535" />
        <Wires d="M72 214L106 202M72 266L106 258M370 202H420" c="#1b97dc" w={5} />
        <Nodes items={[[39, 138, 64, 18, "r"], [39, 177, 52, 17, "r"], [39, 234, 48, 17, "r"], [117, 142, 45, 28, "b"], [102, 175, 45, 38, "b"], [102, 234, 45, 36, "b"], [198, 175, 45, 29, "b"], [297, 172, 45, 53, "g"], [417, 166, 45, 71, "b"], [534, 166, 45, 29, "b"], [39, 210, 38, 8, "p"], [39, 262, 38, 8, "p"], [366, 198, 50, 8, "p"]]} />
        <Wires d="M160 362L185 366H400L640 371L715 368" />
        <Wires d="M208 392H240L264 374M300 406H335L356 382M660 391H690L714 374M490 391H514" c="#1b97dc" w={5} />
        <Wires d="M552 388L600 380H636" c="#8be03c" w={5} />
        <Nodes items={[[117, 348, 45, 18, "r"], [177, 348, 45, 29, "b"], [261, 348, 45, 36, "b"], [351, 348, 45, 72, "b"], [510, 373, 44, 20, "v"], [633, 355, 45, 29, "b"], [711, 348, 45, 36, "b"], [207, 388, 36, 8, "p"], [297, 402, 40, 8, "p"], [462, 387, 50, 8, "p"], [657, 388, 40, 8, "p"]]} />
        <Wires d="M95 605L130 610" />
        <Nodes items={[[39, 594, 63, 14, "r"], [126, 594, 45, 36, "b"]]} />
        <Wires d="M124 802H156" />
        <Wires d="M122 834L156 816" c="#c8649a" w={5} />
        <Nodes items={[[81, 789, 48, 18, "r"], [150, 786, 45, 36, "b"], [33, 828, 46, 8, "p"], [78, 820, 45, 20, "v"], [150, 861, 45, 30, "b"]]} />
      </g>

      <g transform="translate(860 200) scale(.34436 .33333)">
        <Wires d="M140 184L160 186H262" />
        <Nodes items={[[87, 173, 58, 16, "r"], [157, 168, 43, 30, "b"], [256, 168, 43, 30, "b"]]} />
        <Wires d="M150 500H174M155 569H400M155 600L188 598C220 592 220 568 250 568M155 628H190C225 622 215 572 250 568M430 572C445 580 450 590 448 602M292 600C288 620 296 624 306 628M340 631H372" />
        <Wires d="M317 601H424" w={9} />
        <Wires d="M248 580H290M345 582H388M115 700H140L160 690" c="#1fa6d0" w={5} />
        <Wires d="M250 591H275L292 584" c="#20b090" w={5} />
        <Nodes items={[[96, 489, 60, 17, "r"], [171, 484, 43, 38, "b"], [96, 561, 62, 16, "r"], [96, 590, 62, 16, "r"], [96, 618, 62, 18, "r"], [168, 562, 34, 14, "v"], [168, 590, 34, 16, "v"], [168, 620, 34, 18, "v"], [287, 552, 43, 36, "b"], [383, 552, 43, 36, "b"], [299, 613, 43, 28, "b"], [369, 613, 43, 28, "b"], [101, 666, 54, 17, "r"], [157, 666, 43, 36, "b"]]} />
        <Wires d="M585 489L612 491" />
        <Nodes items={[[531, 479, 60, 15, "r"], [607, 474, 43, 36, "b"]]} />
        <Wires d="M1005 487H1325" />
        <Nodes items={[[950, 474, 60, 18, "r"], [1025, 468, 43, 30, "b"], [1127, 468, 43, 30, "b"], [1220, 468, 43, 30, "b"], [1321, 468, 43, 30, "b"]]} />
        <Wires d="M595 691H735M595 769H735" />
        <Nodes items={[[537, 682, 62, 16, "r"], [729, 676, 43, 37, "b"], [537, 759, 62, 15, "r"], [729, 754, 43, 35, "b"], [641, 686, 34, 16, "v"], [641, 764, 34, 16, "v"], [590, 711, 36, 13, "d"], [590, 733, 30, 10, "d"], [671, 724, 38, 8, "p"], [537, 721, 34, 5, "d"]]} />
        <Wires d="M540 724L575 723L595 714H620L650 700L735 708M575 723L600 737H620L640 768L660 778L735 784" c="#8be03c" w={5} />
        <Wires d="M675 728H706L732 700M706 728L724 764" c="#1b97dc" w={5} />
      </g>
    </g>
  </svg>
);

const GraphPanel = () => (
  <section className="flex min-h-0 flex-1 flex-col">
    <DockTab label="Event Graph" active icon={<GraphGlyph />} />
    <div className="relative min-h-0 flex-1 overflow-hidden border-2 border-[#434343] bg-[#262626]">
      <GraphArt />
      {bubbles.map(([text, place, look]) => (
        <div key={text} className={`absolute flex h-[27px] items-center rounded border bg-gradient-to-b px-2 text-[13px] whitespace-nowrap ${place} ${look}`}>{text}</div>
      ))}
      <div className="pointer-events-none absolute inset-0 shadow-[inset_0_0_70px_rgba(0,0,0,.5)]" />
      <div className="absolute right-2.5 bottom-3 text-[56px] leading-[68px] font-bold text-white/20">WIDGET BLUEPRINT</div>
      <div className="absolute inset-x-0 top-0 flex h-[42px] items-center bg-black/60 pr-1.5 pl-[7px]">
        <button aria-label="Bookmark">
          <svg width="19" height="19" viewBox="0 0 19 19"><path d="M9.500 1.500l2.300 5.700 6 .4-4.600 3.900 1.500 6-5.200-3.300-5.200 3.300 1.500-6L1.200 7.600l6-.4z" fill="none" stroke="#d6d6d6" strokeWidth="1.300" /></svg>
        </button>
        <div className="mx-1.5 h-9 w-px bg-[#6a6a6a]" />
        <button aria-label="Back" className="ml-1.5"><svg width="17" height="20" viewBox="0 0 17 20"><path d="M0 10L9 0v6h7v8H9v6z" fill="#8a8a8a" /></svg></button>
        <button aria-label="Forward" className="ml-[25px]"><svg width="17" height="20" viewBox="0 0 17 20"><path d="M17 10L8 0v6H1v8h7v6z" fill="#8a8a8a" /></svg></button>
        <div className="mr-3 ml-4 h-9 w-px bg-[#6a6a6a]" />
        <GraphGlyph size={24} />
        <div className="ml-3.5 flex items-center text-[19px] text-[#8b8b8b]">
          <button>UI_AvatarInteraction_JOBS_descartado</button>
          <svg className="mx-2.5" width="10" height="16" viewBox="0 0 10 16" aria-hidden="true"><path d="M1.500 1l6 7-6 7" fill="none" stroke="#f0f0f0" strokeWidth="1.800" /></svg>
          <button>Event Graph</button>
        </div>
        <span className="ml-auto pb-1 text-lg font-bold text-[#303030]">Zoom -12</span>
      </div>
    </div>
  </section>
);

const CompilerPanel = () => (
  <section className="flex h-[267px] shrink-0 flex-col">
    <DockTab
      label="Compiler Results"
      icon={
        <svg width="15" height="16" viewBox="0 0 15 16" aria-hidden="true">
          <path d="M1 0h11l3 3-1 13H0z" fill="#c5d7f4" />
          <path d="M3 3l5 4-5 4M8 12h5" fill="none" stroke="#1d2c52" strokeWidth="2" />
        </svg>
      }
    />
    <div className="flex flex-1 flex-col bg-[#3e3e3e] px-1.5 pt-1.5">
      <div className="flex-1 rounded-sm bg-[#222222]" />
      <div className="flex h-[37px] items-center justify-end pr-1.5 text-xs text-[#777777]"><button>Clear</button></div>
    </div>
  </section>
);

/* ---------- details ---------- */

type Row = [string, "text" | "check" | string];
const sections: [string, Row[]][] = [
  ["Default", [["Question", "text"], ["Audio Volume", "1.0"], ["Button Transform", "0.0"], ["Next General Button Position", "0"], ["Previus General Button Position", "0"], ["Config Subtitle", "check"], ["Config Back", "check"]]],
  ["CONFIG BUTTON", [["CONFIG BUTTON", "check"], ["CONFIG INDEX", "0"]]],
  ["Camera Configs", [["Camera Index", "0"], ["Config Camera", "check"], ["Config Camera Index", "0"]]],
  ["Audio Configs", [["Config Audio", "check"], ["Config Audio Index", "0"]]],
  ["Eye Configs", [["Config Eye", "check"], ["Config Eye Index", "0"]]],
  ["Buttons Values", [["Last Button Pressed", "50"]]],
  ["FAQ Options", [["Questions Opening Index", "0"], ["Questions Type", "2"], ["Config FAQ", "check"]]],
];

const SectionHeader = ({ title }: { title: string }) => (
  <div className="flex h-[29px] shrink-0 rounded-t-sm bg-[#2f2f2f]">
    <div className="flex w-[152px] items-center gap-1 border-r border-[#222] pl-0.5">
      <span className="pt-0.5"><Expanded /></span>
      <h2 className="text-xs font-bold whitespace-nowrap text-[#dcdcdc] [text-shadow:1px_1px_0_#000]">{title}</h2>
    </div>
  </div>
);

const PropertyRow = ({ label, value }: { label: string; value: string }) => {
  const id = "p-" + label.replace(/ /g, "-");
  return (
    <div className="flex h-6 items-center">
      <label htmlFor={id} className="flex h-full w-[152px] shrink-0 items-center overflow-hidden border-r border-[#222] pt-0.5 pl-4 text-[11px] whitespace-nowrap text-[#c8c8c8]">{label}</label>
      {value === "check" && <input id={id} type="checkbox" className="ml-1 size-3.5 appearance-none rounded-[2px] bg-[#adadad] checked:bg-[#e0a040]" />}
      {value === "text" && <input id={id} type="text" className="ml-[3px] h-[17px] w-[230px] rounded-sm bg-[#d8d8d8] px-1 text-[11px] text-[#1c1c1c]" />}
      {value !== "check" && value !== "text" && (
        <div className="relative ml-[3px]">
          <input id={id} type="text" defaultValue={value} className="block h-[17px] w-[105px] rounded-sm bg-[#d8d8d8] px-1 text-[11px] text-[#1c1c1c]" />
          <svg className="pointer-events-none absolute top-1 right-1.5" width="9" height="9" viewBox="0 0 9 9" aria-hidden="true"><path d="M3 0h6v6zM0 3l6 6H0z" fill="#0a0a0a" /><path d="M1 1l7 7" stroke="#d8d8d8" strokeWidth="1.500" /></svg>
        </div>
      )}
    </div>
  );
};

const DetailsPanel = () => (
  <aside className="flex w-[452px] shrink-0 flex-col">
    <DockTab
      label="Details"
      icon={
        <svg width="17" height="16" viewBox="0 0 17 16" aria-hidden="true">
          <circle cx="7" cy="7" r="6" fill="#3a3a3a" stroke="#5876c8" strokeWidth="1.800" />
          <path d="M11 11l5 5" stroke="#5876c8" strokeWidth="2.500" />
          <path d="M6 3h2v2H6zM5 6h3v4h1v1H5v-1h1V7H5z" fill="#e6e6e6" />
        </svg>
      }
    />
    <div className="relative flex min-h-0 flex-1 flex-col overflow-hidden bg-[#3e3e3e] px-0.5">
      <div className="flex h-[26px] shrink-0 items-center pr-1 pl-0.5">
        <div className="flex h-[18px] flex-1 items-center rounded-[1px] bg-[#c9c9c9] pl-[5px]">
          <input aria-label="Search details" placeholder="Search Details" className="min-w-0 flex-1 bg-transparent text-xs outline-none placeholder:text-[#808080]" />
          <Magnifier />
        </div>
        <button aria-label="Property matrix" className="ml-[9px] flex h-[22px] w-[26px] items-center justify-center rounded-[1px] border border-[#d0d0d0] bg-gradient-to-b from-[#cacaca] to-[#9c9c9c]">
          <svg width="14" height="14" viewBox="0 0 14 14"><path d="M0 1.500h14M0 4.200h14M0 7h14M0 9.800h14M0 12.500h14" stroke="#555" strokeWidth="1.500" strokeDasharray="4 1 4 1 4" /></svg>
        </button>
        <button aria-label="Details view options" className="ml-1 flex items-center gap-0.5 text-[#bdbdbd]"><ViewEye /><Caret className="h-[5px] w-[9px]" /></button>
      </div>
      {sections.map(([title, rows]) => (
        <section key={title} className="shrink-0">
          <SectionHeader title={title} />
          {rows.map(([l, v]) => <PropertyRow key={l} label={l} value={v} />)}
          <div className="mb-0.5 h-[11px] w-[152px] border-r border-[#222]" />
        </section>
      ))}
      <section>
        <SectionHeader title="Appearance" />
        {["Color and Opacity", "Foreground Color", "Padding"].map((l) => (
          <div key={l} className="flex h-[22px] items-center">
            <button className="flex h-full w-[152px] shrink-0 items-center gap-1.5 overflow-hidden border-r border-[#222] pt-0.5 pl-[5px] text-[11px] whitespace-nowrap text-[#c8c8c8]"><Collapsed />{l}</button>
            {l === "Padding" && <input aria-label="Padding" defaultValue="0.0" className="mt-1 ml-[3px] h-[18px] w-[234px] rounded-sm bg-[#d8d8d8] px-1 text-[11px] text-[#1c1c1c]" />}
          </div>
        ))}
      </section>
      <div className="absolute top-7 right-[4px] bottom-1 flex w-3 flex-col items-center">
        <div className="h-[427px] w-3 rounded-[1px] border border-[#222] bg-white" />
        <div className="w-px flex-1 bg-[#5a5a5a]" />
      </div>
      <div role="status" className="absolute right-3.5 bottom-[15px] flex h-[54px] w-[415px] items-center border border-black bg-gradient-to-b from-[#2a2a2a] via-[#1a1a1a] to-[#202020] pl-5 text-[21px] font-bold text-[#dadada]">
        <svg width="32" height="31" viewBox="0 0 32 31" aria-hidden="true"><path d="M16 1l15 29H1z" fill="#555" stroke="#0c0c0c" strokeWidth="1.500" /><path d="M15 11h2l-.4 9h-1.200zM15 22h2v2.500h-2z" fill="#fff" /></svg>
        <span className="ml-3.5">Compiling Shaders (1,345)</span>
      </div>
    </div>
  </aside>
);

export default function App() {
  return (
    <div className="flex h-screen w-full flex-col overflow-hidden bg-[#1d1a24] pt-2 font-['Roboto',sans-serif] [background-image:linear-gradient(#000,#000)] [background-repeat:no-repeat] [background-size:100%_8px]">
      <div className="flex min-h-0 flex-1">
        <div className="flex w-2 shrink-0 flex-col justify-end bg-[linear-gradient(to_bottom,#241f2a_0%,#2a2630_20%,#4c4630_32%,#3e3028_36%,#8a4a3c_42%,#b06058_46%,#c9a8ac_52%,#e4d0d6_60%,#b8a0a0_66%,#c08a68_72%,#7c6a40_77%,#5c5c34_88%,#4c4c2e_92%,#22221e_94%,#22221e_100%)]">
          <span className="overflow-hidden text-[10px] leading-3 font-bold text-[#ddd]">3</span>
        </div>
        <div className="flex min-w-0 flex-1 flex-col border-l border-[#1a1a1a] bg-[#222222] pr-px">
          <TitleBar />
          <MenuBar />
          <Toolbar />
          <main className="flex min-h-0 flex-1 gap-[5px]">
            <BlueprintPanel />
            <div className="flex min-w-0 flex-1 flex-col">
              <GraphPanel />
              <CompilerPanel />
            </div>
            <DetailsPanel />
          </main>
        </div>
      </div>
      <footer className="flex h-2 shrink-0 overflow-hidden bg-[#1d1a24] text-[11px] leading-3 text-white">
        <div className="w-14 bg-[#26221e]" />
        <div className="flex flex-1 border-t border-l border-[#555] bg-[#2b2b2b]"><div className="ml-auto h-full w-[65px] rounded-t-full bg-[#a98444]" /></div>
        <div className="w-[395px] bg-[#221e24]" />
        <div className="w-12 bg-[#4b484f]" />
        <div className="flex w-[1142px] justify-end gap-7 pt-0.5 pr-[76px]"><span>POR</span><span>21:42</span></div>
      </footer>
    </div>
  );
}
